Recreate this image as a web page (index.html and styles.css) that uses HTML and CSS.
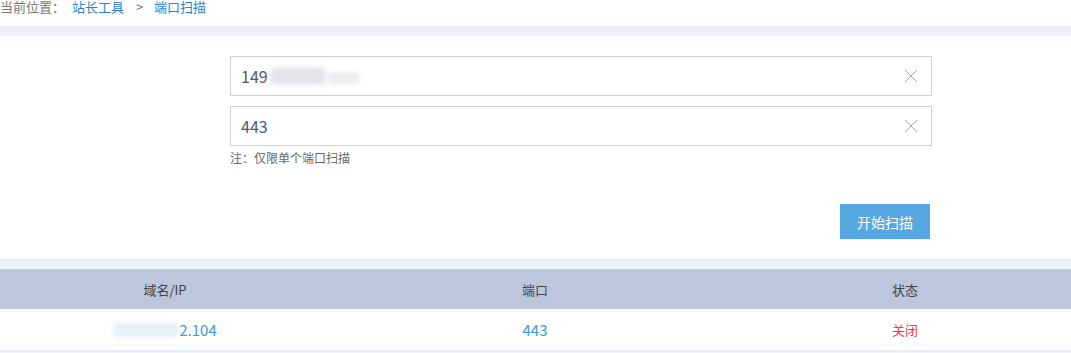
FILE: index.html
```html
<!DOCTYPE html>
<html lang="zh-CN">
<head>
<meta charset="utf-8">
<title>端口扫描</title>
<link rel="stylesheet" href="styles.css">
</head>
<body>
<div class="crumb">
  <span class="crumb-label">当前位置：</span>
  <a class="crumb-link" href="#">站长工具</a>
  <span class="crumb-sep">&gt;</span>
  <a class="crumb-link" href="#">端口扫描</a>
</div>
<div class="band"></div>
<section class="panel">
  <div class="form">
    <div class="field">
      <span class="field-text">149<span class="blur blur-a"></span><span class="blur blur-b"></span></span>
      <svg class="clear" width="14" height="14" viewBox="0 0 14 14"><path d="M1 1L13 13M13 1L1 13" stroke="#a8a8a8" stroke-width="1" fill="none"/></svg>
    </div>
    <div class="field">
      <span class="field-text">443</span>
      <svg class="clear" width="14" height="14" viewBox="0 0 14 14"><path d="M1 1L13 13M13 1L1 13" stroke="#a8a8a8" stroke-width="1" fill="none"/></svg>
    </div>
    <p class="note">注：仅限单个端口扫描</p>
    <div class="actions">
      <button class="btn" type="button">开始扫描</button>
    </div>
  </div>
</section>
<div class="band"></div>
<div class="table">
  <div class="thead">
    <div class="cell">域名/IP</div>
    <div class="cell">端口</div>
    <div class="cell">状态</div>
  </div>
  <div class="trow">
    <div class="cell blue"><span class="blur blur-c"></span><span class="ip-tail">2.104</span></div>
    <div class="cell blue">443</div>
    <div class="cell red">关闭</div>
  </div>
</div>
<div class="band band-bottom"></div>
</body>
</html>
```
FILE: styles.css
```css
html, body {
  margin: 0;
  padding: 0;
}
body {
  width: 1071px;
  height: 353px;
  overflow: hidden;
  background: #f1f4f9;
  font-family: "Noto Sans CJK SC", "Microsoft YaHei", sans-serif;
  color: #555;
}
.crumb {
  height: 26px;
  background: #fff;
  font-size: 13px;
  line-height: 14px;
  color: #777;
  white-space: nowrap;
}
.crumb-label {
  margin-right: 4px;
}
.crumb-link {
  color: #2b80d2;
  text-decoration: none;
}
.crumb-sep {
  color: #777;
  margin: 0 8px 0 9px;
}
.band {
  height: 10px;
  background: linear-gradient(#e6edf6, #f1f4f9);
}
.band-bottom {
  height: 3px;
}
.panel {
  background: #fff;
  padding: 20px 0 20px 230px;
}
.form {
  width: 702px;
}
.field {
  box-sizing: border-box;
  height: 40px;
  border: 1px solid #c9cfdd;
  display: flex;
  align-items: center;
  justify-content: space-between;
  padding: 0 13px 0 10px;
  margin-bottom: 10px;
}
.field:nth-of-type(2) {
  margin-bottom: 0;
}
.field-text {
  font-size: 16px;
  color: #55556a;
  display: flex;
  align-items: center;
}
.blur {
  display: inline-block;
  filter: blur(2px);
  border-radius: 6px;
}
.blur-a {
  width: 56px;
  height: 18px;
  background: #e4e5e9;
  margin-left: 2px;
}
.blur-b {
  width: 34px;
  height: 12px;
  background: #ededf0;
  margin-top: 4px;
}
.blur-c {
  width: 66px;
  height: 16px;
  background: #e8f1fa;
  vertical-align: middle;
}
.ip-tail {
  vertical-align: middle;
}
.clear {
  display: block;
}
.note {
  margin: 4px 0 0;
  font-size: 12px;
  line-height: 16px;
  color: #666;
}
.actions {
  display: flex;
  justify-content: flex-end;
  margin-top: 38px;
  padding-right: 2px;
}
.btn {
  width: 90px;
  height: 35px;
  border: 0;
  background: #55a8e2;
  color: #fff;
  font-family: "Noto Sans CJK SC", sans-serif;
  font-size: 14px;
  padding: 0;
}
.table {
  margin-left: -20px;
  width: 1110px;
}
.thead, .trow {
  display: grid;
  grid-template-columns: 370px 370px 370px;
}
.thead {
  height: 40px;
  background: #bcc6dc;
  color: #444;
  font-size: 13px;
}
.trow {
  height: 41px;
  background: #fff;
  font-size: 15px;
}
.cell {
  display: flex;
  align-items: center;
  justify-content: center;
}
.blue {
  color: #3d97dc;
}
.red {
  color: #f23a3a;
  font-size: 13px;
}
```
